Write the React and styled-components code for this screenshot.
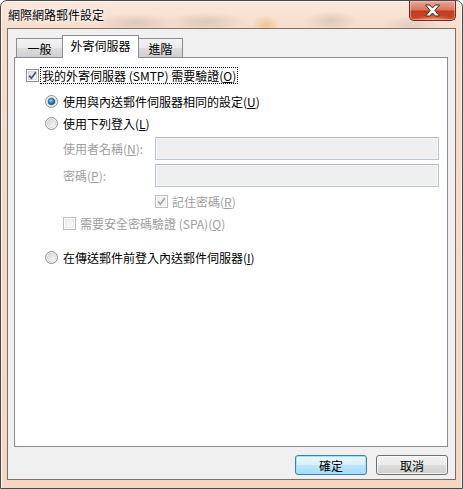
import React from "react";
import styled, { createGlobalStyle, css } from "styled-components";

const GlobalStyle = createGlobalStyle`
  html, body {
    margin: 0;
    padding: 0;
    background: #ffffff;
  }
  body {
    font-family: "Noto Sans CJK TC", "Noto Sans", sans-serif;
    font-size: 12px;
  }
  * {
    box-sizing: border-box;
  }
`;

const Window = styled.div`
  width: 463px;
  height: 489px;
  border: 1px solid #4a4a4a;
  border-radius: 7px 7px 0 0;
  background:
    radial-gradient(ellipse 40px 10px at 135px 22px, rgba(190, 170, 160, 0.45), transparent),
    radial-gradient(ellipse 40px 10px at 205px 21px, rgba(190, 170, 160, 0.45), transparent),
    radial-gradient(ellipse 14px 10px at 265px 24px, rgba(235, 170, 90, 0.5), transparent),
    radial-gradient(ellipse 26px 10px at 330px 20px, rgba(190, 170, 160, 0.45), transparent),
    radial-gradient(ellipse 30px 9px at 410px 24px, rgba(200, 180, 170, 0.4), transparent),
    linear-gradient(to bottom, #fae8dc 0px, #f6dccb 28px, #f4d6c2 100%);
  box-shadow: inset 1px 1px 0 rgba(255, 255, 255, 0.7), inset -1px 0 0 rgba(255, 255, 255, 0.6);
  display: flex;
  flex-direction: column;
  padding: 0 6px 8px 6px;
  overflow: hidden;
`;

const TitleBar = styled.div`
  height: 27px;
  display: flex;
  align-items: flex-start;
  justify-content: space-between;
`;

const Title = styled.div`
  padding: 6px 0 0 1px;
  line-height: 16px;
  color: #000;
  text-shadow: 0 0 6px #fff, 0 0 3px #fff;
`;

const CloseButton = styled.div`
  width: 47px;
  height: 20px;
  border: 1px solid #6a2c22;
  border-top: none;
  border-radius: 0 0 5px 5px;
  background:
    radial-gradient(ellipse 20px 5px at 50% 100%, rgba(255, 170, 120, 0.8), transparent),
    linear-gradient(to bottom, #eaa897 0%, #d9775f 45%, #c43a1e 55%, #c94a2c 100%);
  box-shadow: inset 0 0 0 1px rgba(255, 220, 210, 0.45);
  display: flex;
  align-items: center;
  justify-content: center;
`;

const Client = styled.div`
  flex: 1;
  border: 1px solid #7b6f68;
  background: #f0f0f0;
  display: flex;
  flex-direction: column;
  padding: 6px 7px 4px 6px;
`;

const TabStrip = styled.div`
  display: flex;
  align-items: flex-end;
  height: 22px;
  padding-left: 2px;
  position: relative;
  z-index: 1;
`;

const Tab = styled.div`
  height: 19px;
  width: ${(p) => p.$w}px;
  border: 1px solid #898c95;
  border-bottom: none;
  margin-left: -1px;
  background: linear-gradient(to bottom, #f2f2f2 0%, #ebebeb 50%, #dddddd 51%, #cfcfcf 100%);
  display: flex;
  align-items: center;
  justify-content: center;
  line-height: 16px;
  padding-top: 2px;
  &:first-child {
    margin-left: 0;
  }
  ${(p) =>
    p.$active &&
    css`
      height: 23px;
      background: #ffffff;
      margin-bottom: -1px;
      align-items: flex-start;
      padding-top: 2px;
      position: relative;
      z-index: 2;
    `}
`;

const Panel = styled.div`
  flex: 1;
  border: 1px solid #898c95;
  background: #ffffff;
  display: flex;
  flex-direction: column;
  padding-right: 8px;
`;

const Row = styled.div`
  display: flex;
  align-items: center;
  height: ${(p) => p.$h || 17}px;
  margin-top: ${(p) => p.$mt}px;
  padding-left: ${(p) => p.$indent}px;
  color: ${(p) => (p.$disabled ? "#9d9d9d" : "#000000")};
  line-height: 15px;
  white-space: nowrap;
`;

const Label = styled.span`
  padding: 0 1px;
  margin-left: ${(p) => p.$gap || 3}px;
  border: 1px dotted ${(p) => (p.$focus ? "#000" : "transparent")};
  line-height: 15px;
`;

const FieldLabel = styled.span`
  width: 92px;
  flex-shrink: 0;
`;

const TextBox = styled.div`
  flex: 1;
  height: 23px;
  border: 1px solid #b7c6d8;
  border-top-color: #abbbd0;
  background: #efefef;
  box-shadow: inset 0 0 0 1px #f4f4f4;
`;

const Spacer = styled.span`
  width: 92px;
  flex-shrink: 0;
`;

const ButtonRow = styled.div`
  display: flex;
  justify-content: flex-end;
  gap: 9px;
  margin-top: 8px;
`;

const Button = styled.div`
  width: 72px;
  height: 20px;
  border: 1px solid #707070;
  border-radius: 3px;
  background: linear-gradient(to bottom, #f2f2f2 0%, #ebebeb 49%, #dddddd 50%, #cfcfcf 100%);
  box-shadow: inset 0 0 0 1px rgba(255, 255, 255, 0.7);
  display: flex;
  align-items: center;
  justify-content: center;
  line-height: 15px;
  ${(p) =>
    p.$default &&
    css`
      border-color: #3c7fb1;
      background: linear-gradient(to bottom, #eaf6fd 0%, #d9f0fc 49%, #bee6fd 50%, #a7d9f5 100%);
      box-shadow: inset 0 0 0 1px #9ee3fb;
    `}
`;

const Check = ({ checked, disabled }) => (
  <svg width="13" height="13" viewBox="0 0 13 13" style={{ flexShrink: 0 }}>
    <defs>
      <linearGradient id={disabled ? "cbd" : "cb"} x1="0" y1="0" x2="1" y2="1">
        <stop offset="0" stopColor={disabled ? "#f0f0f0" : "#dcdcdc"} />
        <stop offset="1" stopColor={disabled ? "#fafafa" : "#fbfbfb"} />
      </linearGradient>
    </defs>
    <rect x="0.5" y="0.5" width="12" height="12" fill="#fff" stroke={disabled ? "#bcbcbc" : "#8e8f8f"} />
    <rect x="2.5" y="2.5" width="8" height="8" fill={`url(#${disabled ? "cbd" : "cb"})`} stroke={disabled ? "#e0e0e0" : "#c4c4c4"} strokeWidth="0.6" />
    {checked && (
      <path
        d="M3.2 6.6 L5.4 9.2 L9.8 3.2"
        fill="none"
        stroke={disabled ? "#a6a6a6" : "#3d4f86"}
        strokeWidth="1.7"
      />
    )}
  </svg>
);

const Radio = ({ checked }) => (
  <svg width="13" height="13" viewBox="0 0 13 13" style={{ flexShrink: 0 }}>
    <defs>
      <linearGradient id="rb" x1="0" y1="0" x2="1" y2="1">
        <stop offset="0" stopColor="#d6d6d6" />
        <stop offset="1" stopColor="#fbfbfb" />
      </linearGradient>
      <radialGradient id="rd" cx="0.4" cy="0.35" r="0.7">
        <stop offset="0" stopColor="#9ad6fa" />
        <stop offset="0.5" stopColor="#2b8ad0" />
        <stop offset="1" stopColor="#0c3f73" />
      </radialGradient>
    </defs>
    <circle cx="6.5" cy="6.5" r="6" fill="#f4f4f4" stroke="#8e8f8f" />
    <circle cx="6.5" cy="6.5" r="4.2" fill="url(#rb)" stroke="#c9c9c9" strokeWidth="0.6" />
    {checked && <circle cx="6.5" cy="6.5" r="3.3" fill="url(#rd)" stroke="#103c68" strokeWidth="0.5" />}
  </svg>
);

const Acc = ({ children }) => <u>{children}</u>;

export default function App() {
  return (
    <>
      <GlobalStyle />
      <Window>
        <TitleBar>
          <Title>網際網路郵件設定</Title>
          <CloseButton>
            <svg width="17" height="13" viewBox="0 0 17 13">
              <path
                d="M1.5 1 L5.8 1 L8.5 4 L11.2 1 L15.5 1 L10.8 6.5 L15.5 12 L11.2 12 L8.5 9 L5.8 12 L1.5 12 L6.2 6.5 Z"
                fill="#ffffff"
                stroke="#3b2a2a"
                strokeWidth="1"
                strokeLinejoin="round"
              />
            </svg>
          </CloseButton>
        </TitleBar>
        <Client>
          <TabStrip>
            <Tab $w={47}>一般</Tab>
            <Tab $w={77} $active>
              外寄伺服器
            </Tab>
            <Tab $w={45}>進階</Tab>
          </TabStrip>
          <Panel>
            <Row $mt={9} $indent={11}>
              <Check checked />
              <Label $focus $gap={1}>
                我的外寄伺服器 (SMTP) 需要驗證(<Acc>O</Acc>)
              </Label>
            </Row>
            <Row $mt={9} $indent={30}>
              <Radio checked />
              <Label>
                使用與內送郵件伺服器相同的設定(<Acc>U</Acc>)
              </Label>
            </Row>
            <Row $mt={5} $indent={30}>
              <Radio />
              <Label>
                使用下列登入(<Acc>L</Acc>)
              </Label>
            </Row>
            <Row $mt={5} $indent={48} $h={23} $disabled>
              <FieldLabel>
                使用者名稱(<Acc>N</Acc>):
              </FieldLabel>
              <TextBox />
            </Row>
            <Row $mt={4} $indent={48} $h={23} $disabled>
              <FieldLabel>
                密碼(<Acc>P</Acc>):
              </FieldLabel>
              <TextBox />
            </Row>
            <Row $mt={6} $indent={48} $disabled>
              <Spacer />
              <Check checked disabled />
              <Label $gap={2}>
                記住密碼(<Acc>R</Acc>)
              </Label>
            </Row>
            <Row $mt={5} $indent={48} $disabled>
              <Check disabled />
              <Label $gap={2}>
                需要安全密碼驗證 (SPA)(<Acc>Q</Acc>)
              </Label>
            </Row>
            <Row $mt={17} $indent={30}>
              <Radio />
              <Label>
                在傳送郵件前登入內送郵件伺服器(<Acc>I</Acc>)
              </Label>
            </Row>
          </Panel>
          <ButtonRow>
            <Button $default>確定</Button>
            <Button>取消</Button>
          </ButtonRow>
        </Client>
      </Window>
    </>
  );
}
